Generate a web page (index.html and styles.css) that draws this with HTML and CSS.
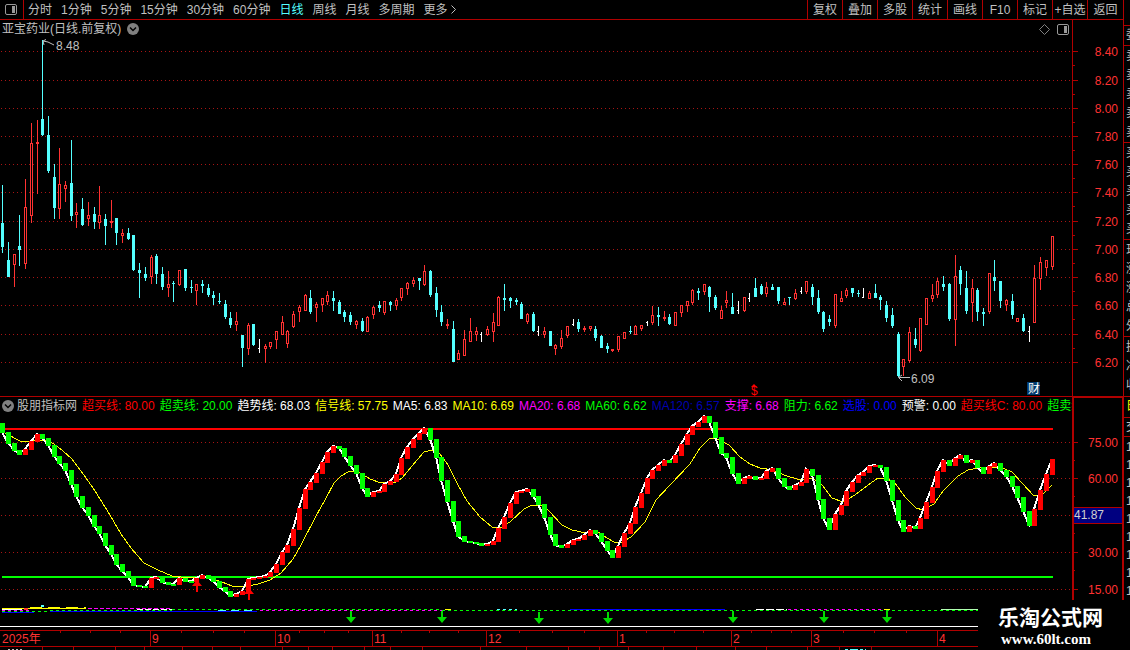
FILE: index.html
```
<!DOCTYPE html>
<html lang="zh-CN">
<head>
  <meta charset="utf-8">
  <title>亚宝药业 日线</title>
  <link rel="stylesheet" href="styles.css">
</head>
<body>

<div class="app">
  <div class="main">
    <div class="toolbar">
      <button class="panel-btn" aria-label="panel">
        <svg width="12" height="11" viewBox="0 0 12 11"><rect x="0.5" y="0.5" width="11" height="10" rx="1.5" fill="none" stroke="#999"/><rect x="7" y="2" width="3" height="7" fill="#999"/></svg>
      </button>
      <div class="periods">
        <button>分时</button>
        <button>1分钟</button>
        <button>5分钟</button>
        <button>15分钟</button>
        <button>30分钟</button>
        <button>60分钟</button>
        <button class="active">日线</button>
        <button>周线</button>
        <button>月线</button>
        <button>多周期</button>
        <button>更多 <svg width="6" height="9" viewBox="0 0 6 9"><path d="M0.5 0.5 L4.5 4.5 L0.5 8.5" fill="none" stroke="#c0c0c0"/></svg></button>
      </div>
      <div class="tools">
        <button>复权</button>
        <button>叠加</button>
        <button>多股</button>
        <button>统计</button>
        <button>画线</button>
        <button>F10</button>
        <button>标记</button>
        <button>+自选</button>
        <button>返回</button>
      </div>
    </div>

    <div class="body">
      <div class="charts">
        <div class="title">
          <span>亚宝药业(日线.前复权)</span>
          <svg width="12" height="12" viewBox="0 0 12 12"><circle cx="6" cy="6" r="6" fill="#808080"/><path d="M3 4.5 L6 7.5 L9 4.5" fill="none" stroke="#000" stroke-width="1.5"/></svg>
          <div class="title-icons">
            <svg width="11" height="11" viewBox="0 0 11 11"><path d="M5.5 0.5 L10.5 5.5 L5.5 10.5 L0.5 5.5 Z" fill="none" stroke="#808080"/></svg>
            <svg width="12" height="11" viewBox="0 0 12 11"><rect x="0.5" y="0.5" width="11" height="10" rx="1.5" fill="none" stroke="#999"/><rect x="7" y="2" width="3" height="7" fill="#999"/></svg>
          </div>
        </div>
        <svg id="price" class="price" viewBox="0 38 1072 358" preserveAspectRatio="xMaxYMin slice"></svg>
        <div class="legend">
          <svg width="12" height="12" viewBox="0 0 12 12"><circle cx="6" cy="6" r="6" fill="#808080"/><path d="M3 4.5 L6 7.5 L9 4.5" fill="none" stroke="#000" stroke-width="1.5"/></svg>
          <span>股朋指标网</span>
          <span class="red">超买线: 80.00</span>
          <span class="green">超卖线: 20.00</span>
          <span class="white">趋势线: 68.03</span>
          <span class="yellow">信号线: 57.75</span>
          <span class="white">MA5: 6.83</span>
          <span class="yellow">MA10: 6.69</span>
          <span class="magenta">MA20: 6.68</span>
          <span class="green">MA60: 6.62</span>
          <span class="navy">MA120: 6.57</span>
          <span class="magenta">支撑: 6.68</span>
          <span class="green">阻力: 6.62</span>
          <span class="blue">选股: 0.00</span>
          <span class="white">预警: 0.00</span>
          <span class="red">超买线C: 80.00</span>
          <span class="green">超卖线C: 20.00</span>
        </div>
        <svg id="indicator" class="indicator" viewBox="0 415 1072 215" preserveAspectRatio="xMaxYMin slice"></svg>
        <svg id="dates" class="dates" viewBox="0 630 1072 20" preserveAspectRatio="xMaxYMin slice"></svg>
      </div>
      <svg id="scale" class="scale" viewBox="1072 20 51 630"></svg>
    </div>
  </div>

  <div class="strip">
    <div class="blank"></div>
    <div class="first">委</div>
    <div>卖<br>卖<br>卖<br>卖<br>卖</div>
    <div>买<br>买<br>买<br>买<br>买</div>
    <div>现<br>涨<br>涨<br>总<br>外</div>
    <div class="tall">换<br>净<br>收</div>
    <div class="first tall yellow">日</div>
    <div class="head">交</div>
    <div class="ticks">1<br>1<br>1<br>1<br>1<br>1<br>1<br>1<br>1</div>
  </div>

  <div class="watermark">
    <div class="site">乐淘公式网</div>
    <div class="url">www.60lt.com</div>
  </div>
</div>

<script src="chart.js"></script>
</body>
</html>
```

FILE: styles.css
```
body {
  margin: 0;
  background: #000;
  color: #c0c0c0;
  font: 12px/18px "Liberation Sans", "Noto Sans CJK SC", sans-serif;
  overflow: hidden;
}

button {
  background: none;
  border: none;
  padding: 0;
  color: inherit;
  font: inherit;
  white-space: nowrap;
  cursor: pointer;
}

svg { display: block; }

.app {
  position: relative;
  display: flex;
  height: 650px;
  overflow: hidden;
}

.main {
  flex: 1;
  min-width: 0;
}

/* top bar */
.toolbar {
  display: flex;
  height: 19px;
  border-bottom: 1px solid #b00000;
}

.panel-btn {
  width: 24px;
  padding: 0 0 1px 5px;
  border-right: 1px solid #b00000;
}

.periods {
  display: flex;
  flex: 1;
  gap: 9px;
  padding-left: 4px;
}

.periods svg { display: inline-block; }

.periods .active { color: #54ffff; }

.tools { display: flex; }

.tools button {
  width: 35px;
  border-left: 1px solid #b00000;
}

.tools button:last-child { width: 36px; }

.body { display: flex; }

.charts {
  flex: 1;
  min-width: 0;
}

.title {
  display: flex;
  align-items: center;
  gap: 6px;
  height: 18px;
  padding: 0 3px 0 2px;
}

.title-icons {
  display: flex;
  gap: 7px;
  margin-left: auto;
}

.price {
  width: 100%;
  height: 358px;
}

.legend {
  display: flex;
  align-items: center;
  gap: 5px;
  height: 18px;
  padding-left: 2px;
  border-top: 1px solid #b00000;
  overflow: hidden;
  white-space: nowrap;
}

.legend svg,
.legend span { flex: none; }

.legend svg { margin-right: -2px; }

.indicator {
  width: 100%;
  height: 215px;
}

.dates {
  width: 100%;
  height: 20px;
}

.scale {
  flex: none;
  width: 51px;
  height: 630px;
}

svg text {
  font: 12px "Liberation Sans", "Noto Sans CJK SC", sans-serif;
}

.red { color: #f00; }
.green { color: #0f0; }
.white { color: #fff; }
.yellow { color: #ff0; }
.magenta { color: #f0f; }
.navy { color: #0000b0; }
.blue { color: #00f; }

/* quote panel, only its left edge shows */
.strip {
  width: 6px;
  border-left: 1px solid #b00000;
  line-height: 19px;
  overflow: hidden;
  white-space: nowrap;
}

.strip div {
  padding: 1px 0 0 2px;
  border-bottom: 1px solid #b00000;
}

.strip .blank { height: 24px; }
.strip .first { padding-top: 0; }
.strip .tall { padding-bottom: 1px; }

.strip .head {
  padding-top: 0;
  line-height: 18px;
}

.strip .ticks {
  border: none;
  line-height: 18px;
}

.watermark {
  position: absolute;
  right: 0;
  bottom: 0;
  width: 132px;
  height: 50px;
  padding-left: 20px;
  box-sizing: content-box;
  background: #000;
  color: #fff;
}

.site {
  padding-top: 6px;
  font-size: 21px;
  line-height: 24px;
  font-weight: bold;
}

.url {
  padding-left: 3px;
  font: bold 15px/18px "Liberation Serif", serif;
}
```

FILE: chart.js
```
// kind high top bottom low
const candles = `
c 185 223 247 253,c 242 260 277 277,r 254 254 265 287,c 215 246 250 266,r 179 207 264 269,r 123 143 216 223,
r 120 142 144 194,c 40 119 135 136,c 116 135 171 173,c 164 177 208 219,r 148 184 209 219,r 181 185 189 202,
c 140 183 216 221,r 203 212 215 228,c 198 209 225 226,r 202 215 219 226,c 207 214 222 229,r 186 215 223 229,
c 214 219 226 245,r 200 221 223 228,c 218 218 233 245,r 229 233 236 243,c 228 233 239 240,c 235 235 270 271,
c 263 270 273 298,c 267 274 278 281,r 255 257 277 284,c 254 256 274 284,c 267 274 287 290,r 271 284 288 297,
c 281 283 284 302,r 270 270 285 286,c 269 269 288 291,c 280 287 288 293,r 284 284 291 305,c 280 284 286 293,
c 284 288 295 297,c 291 295 298 305,c 293 301 302 304,c 300 304 317 319,c 312 318 325 328,r 312 321 325 331,
c 335 335 348 367,r 323 325 349 355,c 324 324 345 346,w 339 348 349 353,r 344 346 349 363,r 342 342 347 349,
r 331 331 340 349,r 316 322 335 335,r 330 331 344 348,r 311 314 327 328,r 305 307 312 322,r 294 295 311 311,
c 290 298 312 314,r 302 304 308 322,r 298 298 305 312,r 291 295 302 305,c 291 298 301 311,c 300 302 314 314,
c 310 312 317 322,c 312 315 322 325,r 320 321 325 329,c 318 321 331 332,r 316 317 332 332,r 306 307 315 319,
c 301 305 308 312,r 301 301 313 315,c 301 302 305 311,r 298 300 306 310,r 288 288 298 301,r 282 283 289 295,
r 277 280 284 287,c 278 278 281 290,r 265 271 285 286,c 270 271 295 297,c 287 293 310 317,c 305 312 322 326,
r 319 324 326 329,c 321 329 362 362,r 350 353 360 360,r 330 339 356 356,r 318 331 342 342,r 327 331 335 341,
w 332 334 335 342,r 326 329 335 336,r 313 322 332 342,r 296 297 326 326,c 284 298 300 311,c 297 298 301 308,
c 298 300 302 305,c 302 304 319 319,r 313 314 322 324,c 312 314 331 332,w 326 331 332 336,r 327 331 335 338,
c 331 331 346 346,r 344 345 349 355,r 330 338 347 349,r 326 326 336 338,w 319 324 325 326,c 319 322 329 332,
r 326 328 330 332,r 326 326 329 331,c 326 329 338 341,c 335 336 348 348,c 343 346 349 353,r 349 349 351 352,
r 336 336 350 352,r 332 332 339 339,c 326 331 332 334,r 325 326 335 335,r 325 325 329 331,w 321 322 323 326,
r 306 315 323 325,c 307 315 317 326,r 311 317 319 321,c 314 317 324 325,r 312 312 326 326,r 305 305 313 317,
r 301 301 306 312,r 289 290 303 305,c 288 291 293 300,r 284 284 292 295,c 286 287 297 312,c 295 297 308 310,
r 306 310 319 319,r 291 300 303 308,c 293 307 314 314,w 301 310 311 314,r 297 297 311 312,w 293 298 299 302,
c 278 288 297 297,c 284 286 294 295,r 282 287 294 297,c 284 287 290 290,c 287 287 301 304,r 298 302 305 305,
c 297 297 298 305,r 289 293 299 300,w 287 291 292 294,r 281 281 292 294,c 284 287 297 305,c 290 298 312 314,
c 311 312 329 332,c 315 319 322 326,r 294 294 326 328,r 291 298 302 302,r 288 290 296 298,c 288 288 293 297,
c 290 293 294 297,w 288 297 298 298,r 291 293 299 299,c 284 293 298 298,c 295 297 300 310,c 301 305 318 322,
c 308 315 326 328,c 332 334 376 377,r 359 359 367 376,r 327 332 361 363,c 328 339 345 348,r 318 318 351 352,
r 298 298 325 325,r 284 295 299 302,r 278 281 295 298,c 276 284 287 291,c 283 284 319 321,r 255 276 320 346,
c 266 270 284 295,c 271 288 311 314,r 279 288 303 322,c 288 290 312 321,c 308 312 314 326,r 273 273 312 314,
c 260 277 281 291,c 281 281 301 308,r 299 300 305 311,c 294 301 315 319,r 318 318 322 322,c 314 318 331 332,
w 326 331 332 342,r 265 278 323 323,r 257 262 279 290,r 260 260 268 276,r 236 236 267 270`
  .split(',').map(s => s.trim().split(' '));

const trend = [
  423, 432, 443, 450, 454, 449, 441, 434, 438, 445, 456, 463, 470, 484, 496, 507, 515, 526, 533, 545,
  554, 564, 571, 577, 585, 586, 587, 578, 577, 582, 584, 584, 578, 581, 581, 578, 575, 578, 581, 587,
  591, 596, 594, 591, 579, 578, 577, 576, 572, 564, 552, 545, 529, 508, 489, 482, 473, 462, 452, 446,
  448, 456, 465, 473, 488, 496, 492, 491, 484, 481, 474, 458, 447, 439, 433, 428, 439, 457, 480, 501,
  521, 536, 541, 542, 543, 545, 544, 541, 528, 517, 503, 492, 491, 489, 496, 504, 517, 534, 545, 547,
  544, 540, 539, 535, 530, 533, 541, 550, 557, 546, 533, 523, 507, 493, 478, 470, 465, 460, 462, 455,
  444, 434, 426, 422, 416, 422, 437, 453, 457, 473, 483, 478, 476, 479, 478, 471, 468, 478, 486, 489,
  485, 482, 469, 475, 499, 518, 529, 514, 505, 491, 482, 475, 472, 466, 465, 467, 480, 500, 520, 531,
  526, 528, 518, 502, 487, 471, 460, 465, 458, 455, 462, 460, 467, 473, 466, 463, 470, 476, 486, 497,
  511, 525, 509, 490, 474, 459
];

const signal = '2,432 8,434 14,438 20,441 26,442 33,441 45,440 54,444 63,451 72,459 84,475 95,491 110,515 ' +
  '121,534 131,548 144,563 158,570 172,576 190,578 205,576 222,582 232,586 243,587 258,584 270,580 281,573 ' +
  '293,559 301,545 316,516 325,500 334,483 341,476 348,472 357,471 370,479 381,483 396,482 402,478 412,466 ' +
  '424,452 432,450 440,454 448,465 457,483 467,501 480,517 492,527 500,528 510,522 524,509 532,505 541,505 ' +
  '548,510 562,525 572,530 586,533 598,532 607,538 614,542 622,542 631,537 645,522 656,500 670,485 690,464 ' +
  '700,448 710,438 717,439 729,445 740,457 750,464 760,468 773,470 784,475 800,480 812,478 822,485 832,498 ' +
  '843,502 855,495 868,485 878,478 886,478 895,483 905,497 916,508 923,510 934,504 943,491 958,476 968,470 ' +
  '978,468 1000,467 1012,472 1022,483 1034,496 1043,494 1052,485';

const colors = { c: '#54ffff', r: '#ff3232', w: '#ffffff' };
const axisRed = '#b00000';

const barX = i => Math.floor(2.84 + 5.702 * i);
const rect = (x, y, w, h, fill) => `<rect x="${x}" y="${y}" width="${w}" height="${h}" fill="${fill}"/>`;
const text = (x, y, s, fill, extra = '') => `<text x="${x}" y="${y}" fill="${fill}" ${extra}>${s}</text>`;
const grid = y => `<path d="M1 ${y}.5 H1072" stroke="#a81414" stroke-dasharray="1 3"/>`;
const dashes = (x1, x2, y, color, dash) =>
  `<path d="M${x1} ${y}.5 H${x2}" stroke="${color}" stroke-dasharray="${dash || 'none'}"/>`;

const priceRows = [51, 80, 108, 136, 164, 192, 221, 249, 277, 305, 334, 362];
const indRows = [442, 478, 515, 552, 589];

function drawPrice() {
  let out = '<g shape-rendering="crispEdges">' + priceRows.map(grid).join('');
  candles.forEach(([kind, ...v], i) => {
    const [high, top, bottom, low] = v.map(Number);
    const x = barX(i);
    const color = colors[kind];
    if (kind === 'w') {
      out += rect(x, high, 1, low - high, color) + rect(x - 1, top, 1, 1, color);
    } else if (kind === 'c' || bottom - top < 3) {
      out += rect(x, high, 1, low - high, color) + rect(x - 1, top, 3, bottom - top, color);
    } else {
      out += rect(x, high, 1, top - high, color) + rect(x, bottom, 1, low - bottom, color);
      out += `<rect x="${x - 0.5}" y="${top + 0.5}" width="2" height="${bottom - top - 1}" fill="#000" stroke="${color}"/>`;
    }
  });
  out += '</g>';

  // high and low marks
  out += '<path d="M54 45 L48 42 L43 41 M46 39.5 L43 41 L44 45" fill="none" stroke="#c0c0c0"/>';
  out += text(56, 50, '8.48', '#c0c0c0');
  out += '<path d="M910 377.5 H899 M902 375 L898.5 377.5 L902 381" fill="none" stroke="#c0c0c0"/>';
  out += text(911, 383, '6.09', '#c0c0c0');

  out += text(751, 395, '$', '#f00', 'font-weight="bold"');
  out += '<path d="M754 384 L757 387 H751 Z" fill="#f00"/>';
  out += rect(1027, 382, 13, 13, '#003a6e') + text(1028, 393, '财', '#fff');
  document.getElementById('price').innerHTML = out;
}

function arrow(x, tip, dir, color) {
  const head = tip + 6 * dir;
  const end = tip + 12 * dir;
  return `<path d="M${x} ${tip} L${x + 5} ${head} H${x + 1} V${end} H${x - 1} V${head} H${x - 5} Z" fill="${color}"/>`;
}

function drawIndicator() {
  let out = '<g shape-rendering="crispEdges">' + indRows.map(grid).join('');
  out += rect(2, 428, 1051, 2, '#f00') + rect(2, 576, 1051, 2, '#0f0');
  out += `<polyline points="${signal}" fill="none" stroke="#ff0"/>`;

  const line = trend.slice(1).map((y, i) => `${barX(i)},${y}`).join(' ');
  out += `<polyline points="${line}" fill="none" stroke="#fff" stroke-width="2"/>`;
  for (let i = 1; i < trend.length; i++) {
    const a = trend[i - 1], b = trend[i];
    out += rect(barX(i - 1) - 2, Math.min(a, b), 5, Math.max(Math.abs(a - b) + 1, 2), b < a ? '#f00' : '#0f0');
  }

  // flattened moving averages
  out += dashes(2, 34, 612, '#00f') + dashes(50, 257, 611, '#00f') + dashes(570, 725, 609, '#00f');
  out += dashes(2, 50, 611, '#0f0', '3 3') + dashes(50, 172, 610, '#0f0', '3 3');
  out += dashes(2, 30, 610, '#f0f', '3 3') + dashes(34, 172, 608, '#f0f', '4 2');
  out += dashes(2, 86, 608, '#ff0') + dashes(30, 86, 607, '#ff0', '12 6') + dashes(2, 22, 609, '#fff');
  out += dashes(137, 172, 609, '#fff', '6 2') + dashes(218, 257, 610, '#54ffff', '8 5');
  out += rect(41, 605, 3, 2, '#54ffff') + rect(24, 608, 4, 2, '#f33');
  out += dashes(172, 442, 609, '#0f0', '3 3') + dashes(260, 442, 610, '#f0f', '3 3');
  out += dashes(442, 978, 610, '#0f0', '3 3') + dashes(445, 451, 609, '#ff0');
  out += dashes(497, 517, 609, '#54ffff', '3 3') + dashes(756, 787, 609, '#fff', '8 2');
  out += dashes(788, 884, 609, '#f0f', '3 3') + dashes(884, 890, 609, '#ff0') + dashes(941, 978, 609, '#b0ffb0');
  out += rect(0, 626, 978, 1, '#fff');
  out += '</g>';

  out += arrow(197, 580, 1, '#f00') + arrow(249, 588, 1, '#f00');
  [[351, 623], [442, 623], [539, 624], [608, 624], [733, 623], [824, 623], [887, 623]]
    .forEach(([x, y]) => out += arrow(x, y, -1, '#00dc00'));
  document.getElementById('indicator').innerHTML = out;
}

function drawDates() {
  const months = [[2, '2025年'], [150, '9'], [275, '10'], [372, '11'], [486, '12'], [617, '1'], [731, '2'], [811, '3'], [937, '4']];
  const upper = [60, 90, 120, 181, 213, 244, 299, 324, 348, 401, 429, 458, 519, 552, 584, 646, 674, 703, 751, 771, 791, 843, 874, 906];
  const lower = [42, 73, 115, 144, 182, 212, 240, 282, 308, 332, 364, 390, 422, 480, 526, 568, 599, 628, 663, 696, 735, 766, 807, 839, 871];
  let out = '<g shape-rendering="crispEdges">';
  out += rect(0, 630, 978, 1, axisRed) + rect(0, 646, 978, 1, axisRed);
  upper.forEach(x => out += rect(x, 631, 1, 2, axisRed));
  lower.forEach(x => out += rect(x, 647, 1, 3, axisRed));
  out += dashes(8, 22, 649, '#c0c0c0', '2 2') + dashes(845, 866, 649, '#54ffff', '3 2 8 2');
  months.forEach(([x], i) => { if (i) out += rect(x, 630, 1, 16, axisRed); });
  out += '</g>';
  months.forEach(([x, s], i) => out += text(i ? x + 2 : x, 643, s, colors.r));
  document.getElementById('dates').innerHTML = out;
}

function drawScale() {
  let out = '<g shape-rendering="crispEdges">';
  out += rect(1072, 20, 1, 377, axisRed) + rect(1072, 396, 51, 2, axisRed);
  out += rect(1072, 396, 2, 204, axisRed) + rect(1122, 396, 1, 204, axisRed);
  priceRows.concat(indRows).forEach(y => out += rect(1073, y, 5, 1, axisRed));
  priceRows.concat(indRows).forEach(y => {
    if (y !== 362 && y !== 589) out += rect(1073, y + (y < 400 ? 14 : 18), 2, 1, axisRed);
  });
  out += rect(1074, 507, 48, 17, '#000080') + rect(1074, 507, 48, 1, axisRed) + rect(1074, 523, 48, 1, axisRed);
  out += '</g>';
  priceRows.forEach((y, i) => out += text(1118, y + 5, (8.4 - i * 0.2).toFixed(2), colors.r, 'text-anchor="end"'));
  indRows.forEach((y, i) => {
    if (i !== 2) out += text(1118, y + 5, (75 - i * 15).toFixed(2), colors.r, 'text-anchor="end"');
  });
  out += text(1074, 519, '41.87', '#d0d0d0');
  document.getElementById('scale').innerHTML = out;
}

drawPrice();
drawIndicator();
drawDates();
drawScale();
```
